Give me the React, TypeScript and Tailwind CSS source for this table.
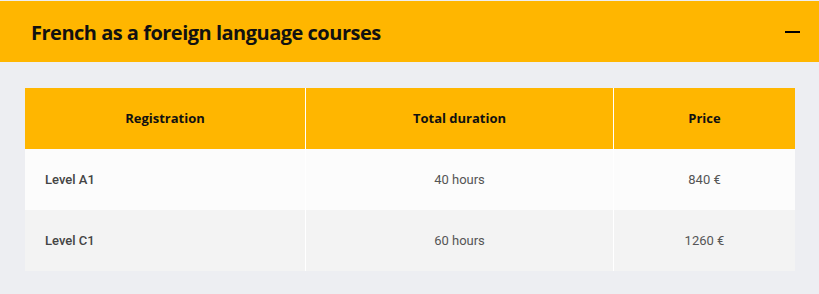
export default function App() {
  const rows = [
    ["Level A1", "40 hours", "840 €", "bg-[#fcfcfc]"],
    ["Level C1", "60 hours", "1260 €", "bg-[#f3f3f3]"],
  ];
  return (
    <div className="w-[819px] h-[294px] bg-[#edeef2] pt-px" style={{ fontFamily: "Roboto, sans-serif" }}>
      <div className="h-[61px] bg-[#ffb600] flex items-center justify-between pl-[31px] pr-[19px]">
        <h2 className="text-[20px] font-bold text-[#111] tracking-[-0.5px] pt-[2px]" style={{ fontFamily: "'Open Sans', sans-serif" }}>
          French as a foreign language courses
        </h2>
        <div className="w-[15px] h-[2px] bg-black" />
      </div>
      <div className="mt-[26px] mx-[25px] w-[770px]">
        <div className="grid grid-cols-[281px_308px_181px] h-[61px] bg-[#ffb600] text-[13px] font-bold text-[#111]" style={{ fontFamily: "'Open Sans', sans-serif" }}>
          <div className="flex items-center justify-center border-r border-white">Registration</div>
          <div className="flex items-center justify-center border-r border-white">Total duration</div>
          <div className="flex items-center justify-center">Price</div>
        </div>
        {rows.map((r) => (
          <div key={r[0]} className={`grid grid-cols-[281px_308px_181px] h-[61px] text-[13px] text-[#555] ${r[3]}`}>
            <div className="flex items-center pl-[20px] font-medium text-[#444] border-r border-white">{r[0]}</div>
            <div className="flex items-center justify-center border-r border-white">{r[1]}</div>
            <div className="flex items-center justify-center">{r[2]}</div>
          </div>
        ))}
      </div>
    </div>
  );
}
